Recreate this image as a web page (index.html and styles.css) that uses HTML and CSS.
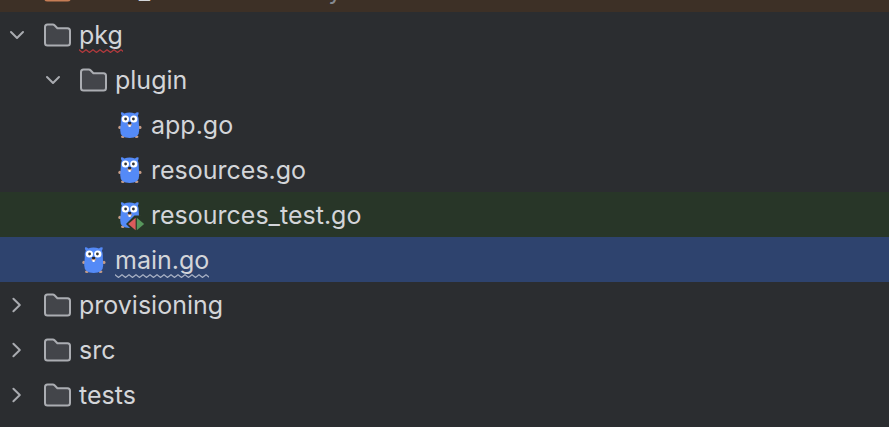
FILE: index.html
```html
<!DOCTYPE html>
<html lang="en">
<head>
    <meta charset="UTF-8">
    <meta name="viewport" content="width=device-width, initial-scale=1.0">
    <title>Project</title>
    <link rel="stylesheet" href="styles.css">
</head>
<body>
    <!-- shared icons -->
    <svg class="sprite" aria-hidden="true">
        <symbol id="down" viewBox="0 0 18 18">
            <path d="M3 6l6 6 6-6" fill="none" stroke="#a9abb0" stroke-width="2" stroke-linecap="round" stroke-linejoin="round"/>
        </symbol>
        <symbol id="right" viewBox="0 0 18 18">
            <path d="M5.4 2.8L11.8 9L5.4 15.2" fill="none" stroke="#a9abb0" stroke-width="2" stroke-linecap="round" stroke-linejoin="round"/>
        </symbol>
        <symbol id="folder" viewBox="0 0 28 28">
            <path d="M2 6Q2 3.5 4.5 3.5H9.8Q10.8 3.5 11.5 4.2L14.4 7.2H24.5Q27 7.2 27 9.7V22Q27 24.5 24.5 24.5H4.5Q2 24.5 2 22Z" fill="#43454a" stroke="#abadb2" stroke-width="2" stroke-linejoin="round"/>
        </symbol>
        <symbol id="library" viewBox="0 0 28 28">
            <path d="M2 6Q2 3.5 4.5 3.5H9.8Q10.8 3.5 11.5 4.2L14.4 7.2H24.5Q27 7.2 27 9.7V22Q27 24.5 24.5 24.5H4.5Q2 24.5 2 22Z" fill="#45322b" stroke="#c77d55" stroke-width="2" stroke-linejoin="round"/>
        </symbol>
        <symbol id="gopher" viewBox="0 0 28 28">
            <g fill="#c69c86">
                <ellipse cx="4.8" cy="16.4" rx="1.5" ry="1.7"/>
                <ellipse cx="25" cy="16.4" rx="1.5" ry="1.7"/>
                <ellipse cx="7.8" cy="25.8" rx="1.8" ry="1.3"/>
                <ellipse cx="21.6" cy="25.8" rx="1.8" ry="1.3"/>
            </g>
            <path d="M6.2 1.2Q8 1 9.2 2.4Q14.6 .8 20 2.4Q21.4 1 23.4 1.2Q24.2 3 22.8 4.6Q24 7 23.8 11L24.2 19Q24.4 27 14.7 27Q5 27 5.2 19L5.8 11Q5.4 7 6.8 4.6Q5.4 3 6.2 1.2Z" fill="#548af7"/>
            <circle cx="10.4" cy="8" r="3.6" fill="#fff"/>
            <circle cx="18.8" cy="8" r="3.6" fill="#fff"/>
            <circle cx="10.6" cy="8" r="1.4" fill="#343434"/>
            <circle cx="18.4" cy="8" r="1.4" fill="#343434"/>
            <ellipse cx="14.6" cy="13.6" rx="2.3" ry="1.6" fill="#c69c86"/>
            <rect x="13.5" y="14" width="2.2" height="2" rx=".4" fill="#fff"/>
            <ellipse cx="14.6" cy="12" rx="1.7" ry="1.3" fill="#2b2522"/>
        </symbol>
    </svg>

    <ul class="tree">
        <li class="clipped">
            <div class="row library">
                <span class="arrow"></span>
                <svg class="icon"><use href="#library"/></svg>
                <span class="name">node_modules</span>
                <span class="note">library root</span>
            </div>
        </li>
        <li>
            <div class="row">
                <button class="arrow" aria-label="Collapse pkg"><svg><use href="#down"/></svg></button>
                <svg class="icon"><use href="#folder"/></svg>
                <span class="name error">pkg</span>
            </div>
            <ul>
                <li>
                    <div class="row level1">
                        <button class="arrow" aria-label="Collapse plugin"><svg><use href="#down"/></svg></button>
                        <svg class="icon"><use href="#folder"/></svg>
                        <span class="name">plugin</span>
                    </div>
                    <ul>
                        <li class="row level2">
                            <span class="arrow"></span>
                            <svg class="icon"><use href="#gopher"/></svg>
                            <span class="name">app.go</span>
                        </li>
                        <li class="row level2">
                            <span class="arrow"></span>
                            <svg class="icon"><use href="#gopher"/></svg>
                            <span class="name">resources.go</span>
                        </li>
                        <li class="row level2 test">
                            <span class="arrow"></span>
                            <svg class="icon" viewBox="0 0 28 28">
                                <use href="#gopher"/>
                                <path d="M11 23L19.5 14.5L29 14.5V29H17Z" fill="#283628"/>
                                <path d="M20.6 16.8V29.2L13.2 23Z" fill="#db5c5c"/>
                                <path d="M21.8 16.8V29.2L29.2 23Z" fill="#57965c"/>
                            </svg>
                            <span class="name">resources_test.go</span>
                        </li>
                    </ul>
                </li>
                <li class="row level1 selected">
                    <span class="arrow"></span>
                    <svg class="icon"><use href="#gopher"/></svg>
                    <span class="name warning">main.go</span>
                </li>
            </ul>
        </li>
        <li class="row">
            <button class="arrow" aria-label="Expand provisioning"><svg><use href="#right"/></svg></button>
            <svg class="icon"><use href="#folder"/></svg>
            <span class="name">provisioning</span>
        </li>
        <li class="row">
            <button class="arrow" aria-label="Expand src"><svg><use href="#right"/></svg></button>
            <svg class="icon"><use href="#folder"/></svg>
            <span class="name">src</span>
        </li>
        <li class="row">
            <button class="arrow" aria-label="Expand tests"><svg><use href="#right"/></svg></button>
            <svg class="icon"><use href="#folder"/></svg>
            <span class="name">tests</span>
        </li>
    </ul>
</body>
</html>
```
FILE: styles.css
```css
body{
    margin: 0;
    background-color: #2b2d30;
    color: #d3d5d9;
    font-family: Inter, "Liberation Sans", sans-serif;
    font-size: 25px;
}
.sprite{
    display: none;
}
ul{
    list-style: none;
    margin: 0;
    padding: 0;
}

/* scrolled row, only its bottom edge is visible */
.clipped{
    display: flex;
    align-items: flex-end;
    height: 12px;
    overflow: hidden;
}
.clipped .row{
    flex: 1;
}

.row{
    display: flex;
    align-items: center;
    height: 45px;
    padding-left: 8px;
    white-space: nowrap;
}
.level1{
    padding-left: 44px;
}
.level2{
    padding-left: 80px;
}
.library{
    background-color: #3d3026;
}
.test{
    background-color: #283628;
}
.selected{
    background-color: #2e436e;
}

.arrow{
    width: 18px;
    height: 18px;
    margin-right: 17px;
    padding: 0;
    border: none;
    background-color: transparent;
    flex-shrink: 0;
}
.arrow svg{
    display: block;
    width: 18px;
    height: 18px;
}
button.arrow{
    cursor: pointer;
}
.icon{
    width: 28px;
    height: 28px;
    margin-right: 8px;
    overflow: visible;
    flex-shrink: 0;
}

.name{
    line-height: 36px;
}
.note{
    margin-left: 16px;
    color: #868a91;
}

/* zigzag underline */
.error, .warning{
    background-repeat: repeat-x;
    background-position: left bottom;
}
.error{
    background-image: url("data:image/svg+xml,%3Csvg xmlns='http://www.w3.org/2000/svg' width='7' height='4'%3E%3Cpath d='M-1 -.2L0 .8L3.5 3.4L7 .8L8 -.2' fill='none' stroke='%23b5393c' stroke-width='1.3'/%3E%3C/svg%3E");
}
.warning{
    background-image: url("data:image/svg+xml,%3Csvg xmlns='http://www.w3.org/2000/svg' width='7' height='4'%3E%3Cpath d='M-1 -.2L0 .8L3.5 3.4L7 .8L8 -.2' fill='none' stroke='%23a9b2c5' stroke-width='1.3'/%3E%3C/svg%3E");
}
```
